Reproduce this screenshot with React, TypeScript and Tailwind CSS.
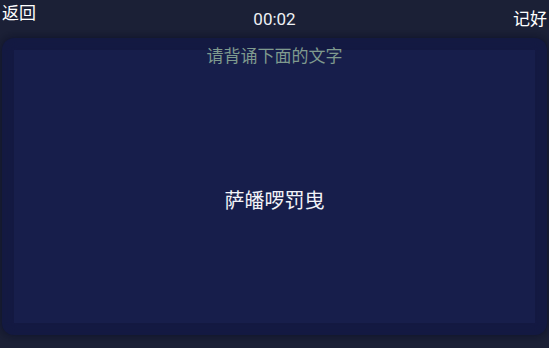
export default function App() {
  const font = { fontFamily: '"Noto Sans CJK SC", Roboto, sans-serif' };
  return (
    <div className="w-[549px] h-[348px] bg-[#1b2036] flex flex-col text-white" style={font}>
      <div className="h-[38px] flex justify-between items-start px-[2px]">
        <span className="text-[17px] leading-[24px]">返回</span>
        <span className="text-[17px] leading-[20px] mt-[9px] text-[#eef0f4]" style={{ fontFamily: 'Roboto, sans-serif' }}>00:02</span>
        <span className="text-[17px] leading-[20px] mt-[8px]">记好</span>
      </div>
      <div className="relative mx-[2px] h-[297px] rounded-[12px] bg-[#141a42] p-[12px] shadow-[0_0_6px_rgba(10,12,30,0.6)]">
        <div className="h-full bg-[#171e4b] flex items-center justify-center shadow-[0_0_8px_6px_rgba(20,26,66,0.9)]">
          <span className="text-[20px] text-[#f2f3f8] mt-[27px]">萨皤啰罚曳</span>
        </div>
        <div className="absolute top-[5px] left-0 right-0 text-center text-[17px] leading-[24px] text-[#7f9a8e]">
          请背诵下面的文字
        </div>
      </div>
    </div>
  );
}
